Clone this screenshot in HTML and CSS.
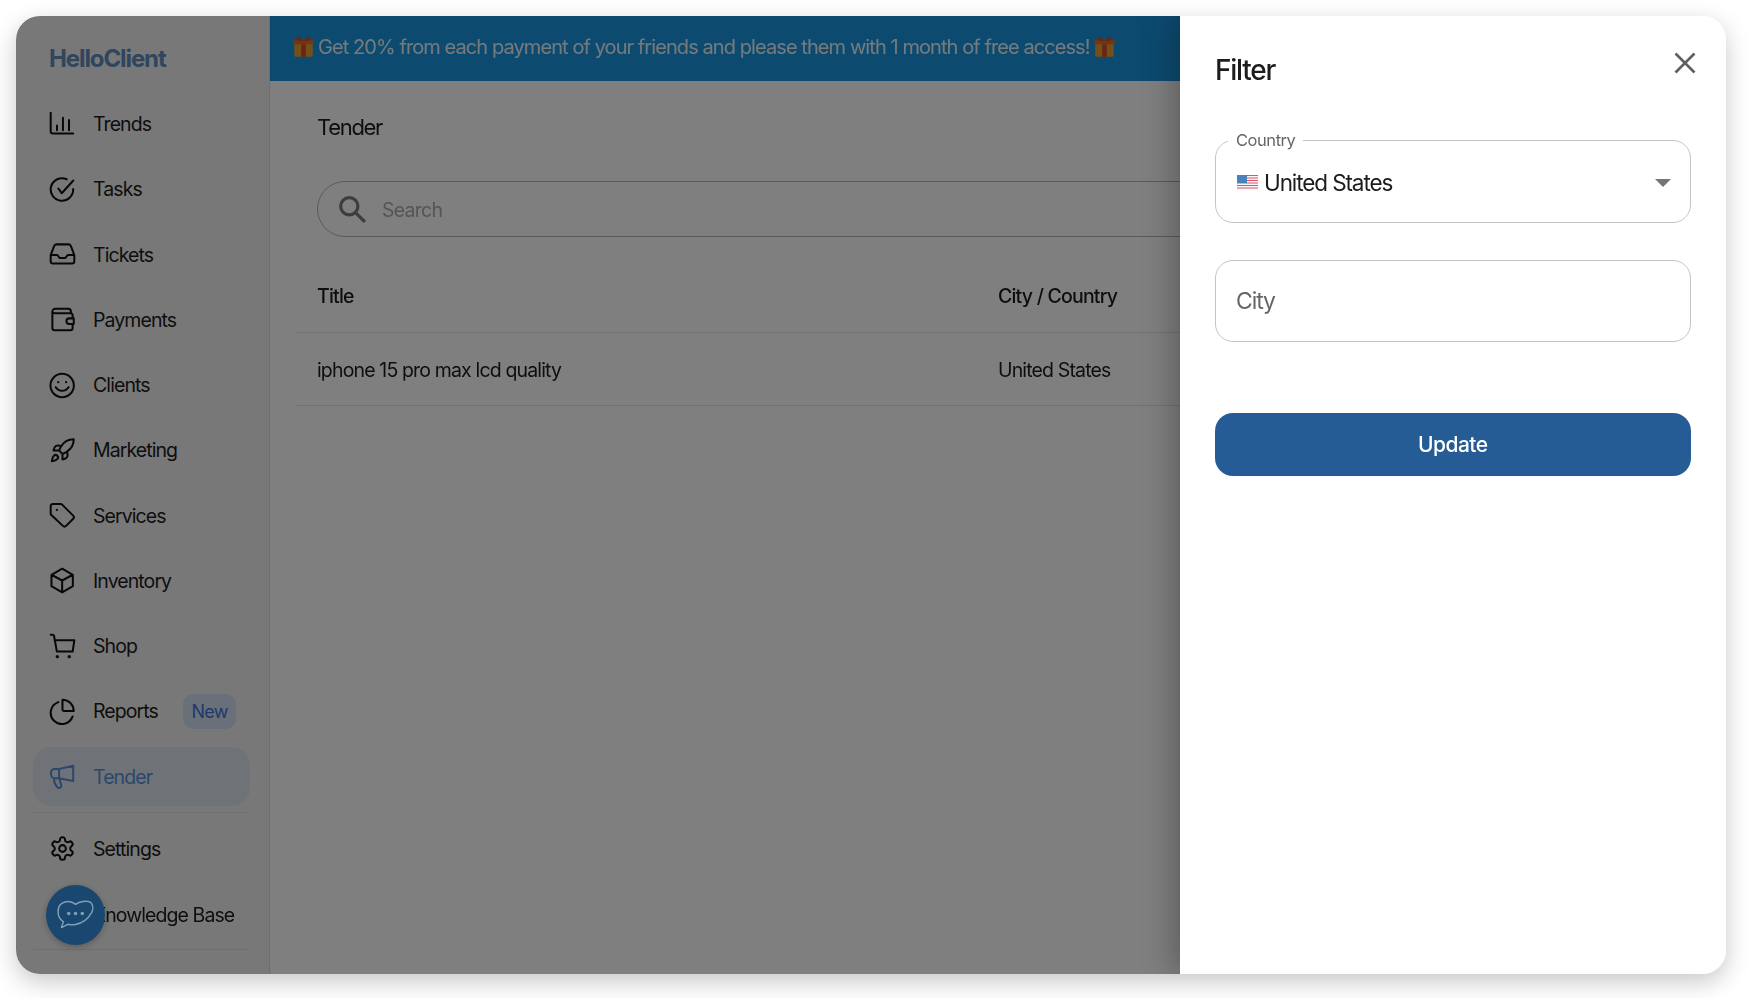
FILE: index.html
```html
<!DOCTYPE html>
<html lang="en">
<head>
<meta charset="utf-8">
<title>HelloClient - Tender</title>
<link rel="stylesheet" href="styles.css">
</head>
<body>
<div class="window">
  <aside class="sidebar">
    <div class="logo">HelloClient</div>
    <nav class="nav">
      <a class="item"><svg class="ico" viewBox="0 0 24 24"><path d="M1.500 1.500V18a2 2 0 0 0 2 2h18M7.100 17v-4M12.400 17V6M17.800 17V8"/></svg><span>Trends</span></a>
      <a class="item"><svg class="ico" viewBox="0 0 24 24"><path d="M21.500 11.500A10 10 0 1 1 15.700 2.900M8.300 11.100l3 4.200L21.600 4"/></svg><span>Tasks</span></a>
      <a class="item"><svg class="ico" viewBox="0 0 24 24"><path d="M1.500 12.500V18a2 2 0 0 0 2 2h17a2 2 0 0 0 2-2v-5.500M1.500 12.500l3-8A2.200 2.200 0 0 1 6.500 3h11a2.200 2.200 0 0 1 2 1.500l3 8M1.500 12.500H7a1 1 0 0 1 .8.4l1.400 1.800a1 1 0 0 0 .8.4h4a1 1 0 0 0 .8-.4l1.400-1.800a1 1 0 0 1 .8-.4h5.500"/></svg><span>Tickets</span></a>
      <a class="item"><svg class="ico" viewBox="0 0 24 24"><path d="M3 5a2.500 2.500 0 0 1 2.500-2.500H17A2.500 2.500 0 0 1 19.500 5v1.500M3 5v14.500a2 2 0 0 0 2 2h14a2 2 0 0 0 2-2v-3M3 5a2 2 0 0 0 2 1.500h14a2 2 0 0 1 2 2V11M21 11h-3a2.500 2.500 0 0 0 0 5h4v-5z"/></svg><span>Payments</span></a>
      <a class="item"><svg class="ico" viewBox="0 0 24 24"><circle cx="11.700" cy="12" r="10.400"/><path d="M6 13.500c1.300 2 3.500 3.200 5.700 3.200s4.400-1.200 5.700-3.200"/><circle class="dot" cx="8.200" cy="9" r="1"/><circle class="dot" cx="15.200" cy="9" r="1"/></svg><span>Clients</span></a>
      <a class="item"><svg class="ico" viewBox="0 0 24 24"><path d="M4.500 16.500c-1.500 1.260-2 5-2 5s3.740-.5 5-2c.71-.84.7-2.130-.09-2.910a2.180 2.180 0 0 0-2.910-.09zM12 15l-3-3a22 22 0 0 1 2-3.950A12.880 12.880 0 0 1 22 2c0 2.720-.78 7.500-6 11a22.350 22.350 0 0 1-4 2zM9 12H4s.55-3.030 2-4c1.620-1.080 5 0 5 0M12 15v5s3.030-.55 4-2c1.080-1.620 0-5 0-5"/></svg><span>Marketing</span></a>
      <a class="item"><svg class="ico" viewBox="0 0 24 24"><path d="M1.500 3.700A2 2 0 0 1 3.500 1.700h6.800a2 2 0 0 1 1.400.6l9.800 9.800a2 2 0 0 1 0 2.800l-6.300 6.300a2 2 0 0 1-2.800 0L2.100 11.500a2 2 0 0 1-.6-1.400z"/><circle class="dot" cx="7" cy="7" r="1"/></svg><span>Services</span></a>
      <a class="item"><svg class="ico" viewBox="0 0 24 24"><path d="M11.700 1.500l9.500 5.400v10.200l-9.500 5.400-9.500-5.400V6.900zM2.200 6.900l9.500 5.100 9.500-5.100M11.700 12v10.500"/></svg><span>Inventory</span></a>
      <a class="item"><svg class="ico" viewBox="0 0 24 24"><path d="M1.500 1.500H3a1.500 1.500 0 0 1 1.500 1.200L7 16.500h14M5 6.500h17.500L21 16.500"/><circle class="dot" cx="7.400" cy="21" r="1.500"/><circle class="dot" cx="18" cy="21" r="1.500"/></svg><span>Shop</span></a>
      <a class="item"><svg class="ico" viewBox="0 0 24 24"><path d="M8.300 3.700A10 10 0 1 0 21 16.400M12 1.500A10 10 0 0 1 22 11.500H13a1 1 0 0 1-1-1z"/></svg><span>Reports</span><em class="badge">New</em></a>
      <a class="item active"><svg class="ico" viewBox="0 0 24 24"><path d="M21.500 2.500V16L9 13.500H5a3.200 3.200 0 0 1-3.200-3.200V8.500A3.200 3.200 0 0 1 5 5.300H9zM9 5.300v8.200M4.500 13.500v1c0 2 1 5 3 7a2 2 0 0 0 3.500-1.500l-2-6.500"/></svg><span>Tender</span></a>
    </nav>
    <div class="foot">
      <a class="item"><svg class="ico" viewBox="0 0 24 24"><path d="M12.220 2h-.44a2 2 0 0 0-2 2v.18a2 2 0 0 1-1 1.730l-.43.25a2 2 0 0 1-2 0l-.15-.08a2 2 0 0 0-2.730.73l-.22.38a2 2 0 0 0 .73 2.730l.15.1a2 2 0 0 1 1 1.720v.51a2 2 0 0 1-1 1.740l-.15.09a2 2 0 0 0-.73 2.730l.22.38a2 2 0 0 0 2.730.73l.15-.08a2 2 0 0 1 2 0l.43.25a2 2 0 0 1 1 1.730V20a2 2 0 0 0 2 2h.44a2 2 0 0 0 2-2v-.18a2 2 0 0 1 1-1.730l.43-.25a2 2 0 0 1 2 0l.15.08a2 2 0 0 0 2.730-.73l.22-.39a2 2 0 0 0-.73-2.730l-.15-.08a2 2 0 0 1-1-1.740v-.5a2 2 0 0 1 1-1.740l.15-.09a2 2 0 0 0 .73-2.730l-.22-.38a2 2 0 0 0-2.730-.73l-.15.08a2 2 0 0 1-2 0l-.43-.25a2 2 0 0 1-1-1.730V4a2 2 0 0 0-2-2z"/><circle cx="12" cy="12" r="3"/></svg><span>Settings</span></a>
      <a class="item"><svg class="ico" viewBox="0 0 24 24"><path d="M4 19V5a2 2 0 0 1 2-2h14v18H6a2 2 0 0 1-2-2z"/></svg><span>Knowledge Base</span></a>
    </div>
  </aside>
  <main class="main">
    <div class="banner">
      <svg class="gift" viewBox="0 0 20 20"><rect class="gift-box" x="2" y="5" width="16" height="14" rx="1.500"/><rect class="gift-rib" x="8" y="5" width="4" height="14"/><rect class="gift-top" x="1" y="4" width="18" height="4" rx="1.500"/><path class="gift-rib" d="M10 5C7 1 3 1 4 3.500S8 5 10 5c2 0 5 1 6-1.500S13 1 10 5z"/></svg>
      <span>Get 20% from each payment of your friends and please them with 1 month of free access!</span>
      <svg class="gift" viewBox="0 0 20 20"><rect class="gift-box" x="2" y="5" width="16" height="14" rx="1.500"/><rect class="gift-rib" x="8" y="5" width="4" height="14"/><rect class="gift-top" x="1" y="4" width="18" height="4" rx="1.500"/><path class="gift-rib" d="M10 5C7 1 3 1 4 3.500S8 5 10 5c2 0 5 1 6-1.500S13 1 10 5z"/></svg>
    </div>
    <section class="content">
      <h1 class="page-title">Tender</h1>
      <div class="search">
        <svg class="search-ico" viewBox="0 0 26 26"><circle cx="10.500" cy="10.500" r="8"/><path d="M16.500 16.500L25 25"/></svg>
        <input class="search-input" placeholder="Search">
      </div>
      <div class="row head"><span>Title</span><span>City / Country</span></div>
      <div class="row"><span>iphone 15 pro max lcd quality</span><span>United States</span></div>
    </section>
  </main>
  <div class="overlay"></div>
  <aside class="panel">
    <div class="panel-head">
      <h2 class="panel-title">Filter</h2>
      <svg class="close" viewBox="0 0 22 22"><path d="M1.500 1.500l19 19M20.500 1.500l-19 19"/></svg>
    </div>
    <fieldset class="field select">
      <legend class="legend">Country</legend>
      <svg class="flag" viewBox="0 0 21 15"><rect width="21" height="15" fill="#f6f6f6"/><path class="flag-red" d="M0 .5h21M0 3h21M0 5.500h21M0 8h21M0 10.500h21M0 13h21"/><rect width="10" height="8" fill="#4d82b8"/></svg>
      <span class="value">United States</span>
      <i class="caret"></i>
    </fieldset>
    <input class="field city" placeholder="City">
    <button class="update">Update</button>
  </aside>
  <button class="fab" aria-label="Chat">
    <svg class="fab-ico" viewBox="0 0 38 32"><path class="fab-line" d="M19 4.500C16 1.800 12 1 8 2 3.500 3.200 1 7 1 12c0 4.500 2 8 5.500 10.500L4.500 28l0 .5 7-3.500c2.500.8 5 .8 7.500.3 7-1.300 13-6 16.500-12 1.800-3.500 1.800-8-.5-10.500C31 .5 23 1 19 4.500z"/><circle cx="12" cy="14" r="1.800"/><circle cx="19" cy="14" r="1.800"/><circle cx="26" cy="14" r="1.800"/></svg>
  </button>
</div>
</body>
</html>
```

FILE: styles.css
```css
* { box-sizing: border-box; }
html, body { margin: 0; height: 100%; background: #fff; }
body { padding: 16px 24px 24px 16px; font-family: Inter, "Liberation Sans", sans-serif; color: #1c1c1c; overflow: hidden; }
.window { position: relative; display: flex; width: 1710px; height: 958px; border-radius: 24px; overflow: hidden; background: #fff; }
body::before { content: ""; position: fixed; left: 16px; top: 16px; width: 1710px; height: 958px; border-radius: 24px; box-shadow: 0 8px 24px rgba(0,0,0,.22); }

.sidebar { flex: 0 0 254px; display: flex; flex-direction: column; padding: 0 19px 0 17px; background: #f1f1f1; border-right: 1px solid #dcdcdc; }
.logo { height: 78.500px; padding: 25px 0 0 16px; font-size: 24px; line-height: 36px; font-weight: 700; letter-spacing: -1.100px; color: #5f8cbc; }
.nav { display: flex; flex-direction: column; gap: 6.250px; padding-bottom: 6px; border-bottom: 1px solid #dedede; }
.foot { display: flex; flex-direction: column; gap: 7px; padding: 6px 0 5px; border-bottom: 1px solid #dedede; }
.item { display: flex; align-items: center; height: 59px; padding-left: 16px; border-radius: 18px; font-size: 19.500px; letter-spacing: -.92px; }
.item > span { margin-left: 17px; white-space: nowrap; }
.ico { flex: none; width: 27px; height: 27px; fill: none; stroke: #111; stroke-width: 1.800; stroke-linecap: round; stroke-linejoin: round; }
.ico .dot { fill: #111; stroke: none; }
.active { background: #dfe7ee; color: #5690d8; }
.active .ico { stroke: #5690d8; }
.badge { margin-left: 25px; padding: 0 8.500px; height: 35px; line-height: 35px; border-radius: 10px; background: #d3e0f5; color: #3f72d6; font-size: 18px; font-style: normal; letter-spacing: -.7px; }

.main { flex: 1; min-width: 0; display: flex; flex-direction: column; background: #fff; }
.banner { flex: 0 0 65px; display: flex; align-items: center; gap: 3px; padding: 0 0 4px 22px; background: #1a95e0; color: #fff; font-size: 20px; letter-spacing: -.92px; }
.banner span { white-space: nowrap; color: #eaf4fa; }
.gift { flex: none; width: 23px; height: 23px; margin-bottom: 1px; }
.gift-box { fill: #e8a030; }
.gift-rib { fill: #d84a28; }
.gift-top { fill: #d8702c; }

.content { padding: 0 0 0 25px; }
.page-title { margin: 0; padding: 29px 0 0 22px; height: 100px; font-size: 22px; line-height: 34px; font-weight: 400; letter-spacing: -1.300px; color: #1c1c1c; }
.search { display: flex; align-items: center; height: 56px; margin-left: 22px; padding-left: 20px; border: 1px solid #b5b5b5; border-radius: 28px; }
.search-ico { flex: none; width: 28px; height: 28px; fill: none; stroke: #7a7a7a; stroke-width: 3; }
.search-input { flex: 1; margin-left: 16px; padding: 2px 0 0; border: 0; outline: 0; background: transparent; font: inherit; font-size: 19.500px; letter-spacing: -.75px; color: #aaa; }
.search-input::placeholder { color: #aaa; opacity: 1; }
.row { display: grid; grid-template-columns: 681px 1fr; align-items: center; height: 73px; padding: 2px 0 0 22px; border-bottom: 1px solid #e2e2e2; font-size: 19.500px; letter-spacing: -.85px; }
.head { height: 96px; padding-top: 22px; font-weight: 500; letter-spacing: -.8px; }

.overlay { position: absolute; inset: 0; background: rgba(0,0,0,.5); }
.panel { position: absolute; top: 0; right: 0; bottom: 0; width: 546px; padding: 0 35px; background: #fff; box-shadow: -6px 0 30px rgba(0,0,0,.28); }
.panel-head { position: relative; height: 114px; }
.panel-title { margin: 0; padding-top: 30px; font-size: 28px; line-height: 48px; font-weight: 500; letter-spacing: -1.250px; color: #1c1c1c; }
.close { position: absolute; right: -5px; top: 36px; width: 22px; height: 22px; fill: none; stroke: #5f5f5f; stroke-width: 2.600; }
.field { display: flex; align-items: center; width: 475.500px; margin: 0; border: 1px solid #c4c4c4; border-radius: 18px; font-family: inherit; }
.select { position: relative; height: 93px; padding: 0 20px 8px; }
.legend { padding: 0 8px; margin-left: -8px; font-size: 16.500px; line-height: 21px; letter-spacing: -.45px; color: #666; }
.flag { flex: none; width: 21px; height: 15px; margin-left: 1px; }
.flag-red { fill: none; stroke: #dd5566; stroke-width: 1.200; }
.value { margin-left: 6px; font-size: 22.500px; letter-spacing: -1.100px; color: #1c1c1c; }
.caret { position: absolute; right: 19px; top: 28px; width: 0; height: 0; border: 8px solid transparent; border-top: 8px solid #757575; border-bottom: 0; }
.city { display: block; height: 82px; margin-top: 37px; padding: 0 20px; outline: 0; font-size: 23px; letter-spacing: -1.100px; color: #666; }
.city::placeholder { color: #666; opacity: 1; }
.update { display: block; width: 475.500px; height: 63px; margin-top: 71px; border: 0; border-radius: 18px; background: #265c96; color: #fff; font-family: inherit; font-size: 21px; font-weight: 500; letter-spacing: -.5px; }

.fab { position: absolute; left: 30px; top: 869px; width: 59px; height: 60px; padding: 0; border: 0; border-radius: 50%; background: #1a4770; box-shadow: 0 2px 6px rgba(0,0,0,.25); display: flex; align-items: center; justify-content: center; }
.fab-ico { width: 37px; height: 31px; fill: #7f9fb9; }
.fab-line { fill: none; stroke: #7f9fb9; stroke-width: 1.500; stroke-linejoin: round; }
```
